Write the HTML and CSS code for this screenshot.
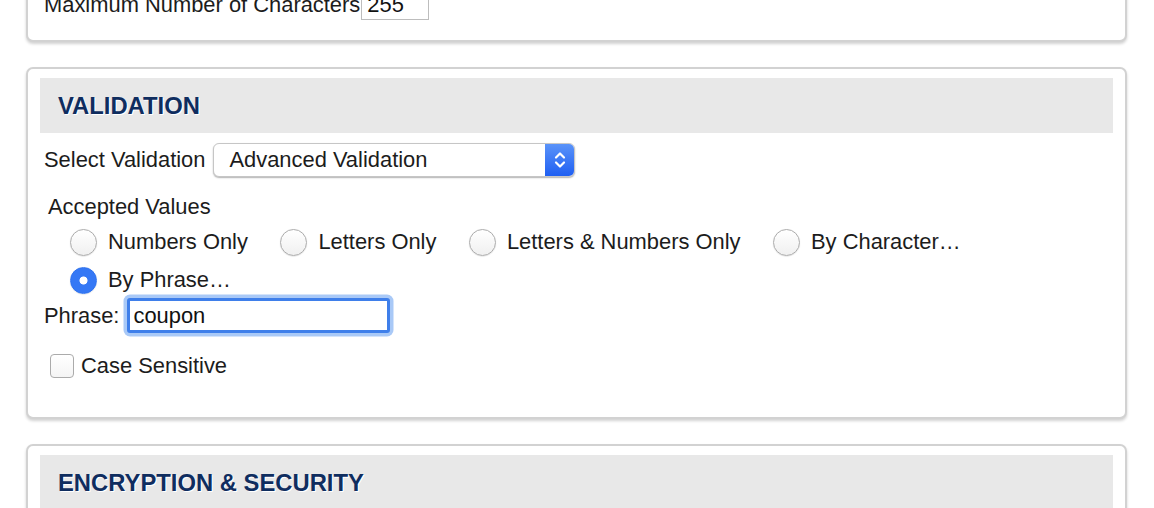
FILE: index.html
```html
<!DOCTYPE html>
<html lang="en">
<head>
<meta charset="utf-8">
<title>Field Settings</title>
<link rel="stylesheet" href="styles.css">
</head>
<body>
<div class="page">
  <section class="card card-first">
    <div class="row">
      <label class="label" for="maxchars">Maximum Number of Characters</label>
      <input class="small-input" id="maxchars" type="text" value="255">
    </div>
  </section>

  <section class="card">
    <h2 class="card-header">VALIDATION</h2>
    <div class="form">
      <div class="row select-row">
        <label class="label" for="validation">Select Validation</label>
        <div class="select-wrap">
          <select id="validation" class="select">
            <option>Advanced Validation</option>
          </select>
          <span class="stepper">
            <svg width="14" height="22" viewBox="0 0 14 22" fill="none" stroke="#fff" stroke-width="2.2" stroke-linecap="round" stroke-linejoin="round"><path d="M3 8.5 L7 4.5 L11 8.5"/><path d="M3 13.5 L7 17.5 L11 13.5"/></svg>
          </span>
        </div>
      </div>

      <div class="accepted-title">Accepted Values</div>
      <div class="radio-group">
        <label class="radio-item"><input type="radio" name="acc" class="radio"><span>Numbers Only</span></label>
        <label class="radio-item"><input type="radio" name="acc" class="radio"><span>Letters Only</span></label>
        <label class="radio-item"><input type="radio" name="acc" class="radio"><span>Letters &amp; Numbers Only</span></label>
        <label class="radio-item"><input type="radio" name="acc" class="radio"><span>By Character…</span></label>
        <label class="radio-item"><input type="radio" name="acc" class="radio" checked><span>By Phrase…</span></label>
      </div>

      <div class="row phrase-row">
        <label class="label" for="phrase">Phrase:</label>
        <div class="phrase-field">
          <input class="phrase-input" id="phrase" type="text" value="coupon" autofocus>
        </div>
      </div>

      <label class="check-row"><input type="checkbox" class="checkbox"><span>Case Sensitive</span></label>
    </div>
  </section>

  <section class="card">
    <h2 class="card-header">ENCRYPTION &amp; SECURITY</h2>
    <div class="form">
      <div class="row"><span class="label">Encrypt Data</span></div>
    </div>
  </section>
</div>
</body>
</html>
```

FILE: styles.css
```css
* { box-sizing: border-box; }

html, body {
  margin: 0;
  padding: 0;
  background: #ffffff;
  overflow: hidden;
}

body {
  font-family: "Liberation Sans", Arial, Helvetica, sans-serif;
  font-size: 21.9px;
  color: #1c1c1c;
  line-height: 26px;
}

.page {
  margin-top: -24px;
  margin-left: 26px;
  width: 1101px;
  display: flex;
  flex-direction: column;
  gap: 25px;
}

.card {
  border: 2px solid #d2d2d2;
  border-radius: 7px;
  padding: 9px 12px 39px 12px;
  box-shadow: 0 2px 3px rgba(0, 0, 0, 0.18);
  background: #fff;
}

.card-first {
  padding: 12px 12px 20px 16px;
}

.card-header {
  margin: 0;
  height: 55px;
  display: flex;
  align-items: center;
  padding-left: 18px;
  background: #e8e8e8;
  color: #0f2d5f;
  font-size: 23.8px;
  font-weight: bold;
  text-shadow: 1px 1px 0 #ffffff;
}

.row {
  display: flex;
  align-items: center;
  gap: 8px;
}

.card-first .row {
  height: 30px;
  gap: 1px;
}

.small-input {
  width: 68px;
  height: 30px;
  border: 1px solid #bdbdbd;
  padding: 0 5px;
  font: inherit;
  color: #111;
  background: #fff;
}

.form {
  padding-left: 4px;
}

.select-row {
  margin-top: 10px;
  height: 34px;
}

.select-wrap {
  display: flex;
  width: 362px;
  height: 34px;
  border: 1px solid #c6c6c6;
  border-radius: 6px;
  box-shadow: 0 1px 1.5px rgba(0, 0, 0, 0.3);
  overflow: hidden;
  background: #fff;
}

.select {
  flex: 1;
  appearance: none;
  -webkit-appearance: none;
  border: none;
  background: transparent;
  font: inherit;
  color: #1c1c1c;
  padding: 0 0 0 15px;
  outline: none;
}

.stepper {
  width: 29px;
  display: flex;
  align-items: center;
  justify-content: center;
  background: linear-gradient(#5a93f9, #1f5ff2);
}

.accepted-title {
  margin-top: 17px;
  padding-left: 4px;
}

.radio-group {
  margin-top: 9px;
  padding-left: 26px;
  display: flex;
  flex-wrap: wrap;
  column-gap: 32.5px;
  row-gap: 12px;
}

.radio-item {
  display: flex;
  align-items: center;
  gap: 11px;
  height: 26px;
}

.radio {
  appearance: none;
  -webkit-appearance: none;
  margin: 0;
  width: 27px;
  height: 27px;
  border-radius: 50%;
  border: 1px solid #acacac;
  background: linear-gradient(#ffffff, #f0f0f0);
  box-shadow: 0 0.5px 1px rgba(0, 0, 0, 0.15);
}

.radio:checked {
  border-color: #2f72ee;
  background: radial-gradient(circle, #ffffff 0 3.6px, #3578f5 4.4px);
}

.phrase-row {
  margin-top: 5px;
  height: 35px;
}

.phrase-field {
  position: relative;
}

.phrase-input {
  display: block;
  width: 263px;
  height: 35px;
  border: 3px solid #3f7fea;
  border-radius: 3px;
  box-shadow: 0 0 0 3.5px #a9c9f7;
  padding: 0 0 0 3px;
  font: inherit;
  color: #111;
  caret-color: #000;
  outline: none;
  background: #fff;
}

.check-row {
  margin-top: 21px;
  padding-left: 6px;
  display: flex;
  align-items: center;
  gap: 7px;
  height: 24px;
}

.checkbox {
  appearance: none;
  -webkit-appearance: none;
  margin: 0;
  width: 24px;
  height: 24px;
  border: 1px solid #ababab;
  border-radius: 4px;
  background: linear-gradient(#ffffff, #f4f4f4);
}

.label {
  white-space: nowrap;
}
```
